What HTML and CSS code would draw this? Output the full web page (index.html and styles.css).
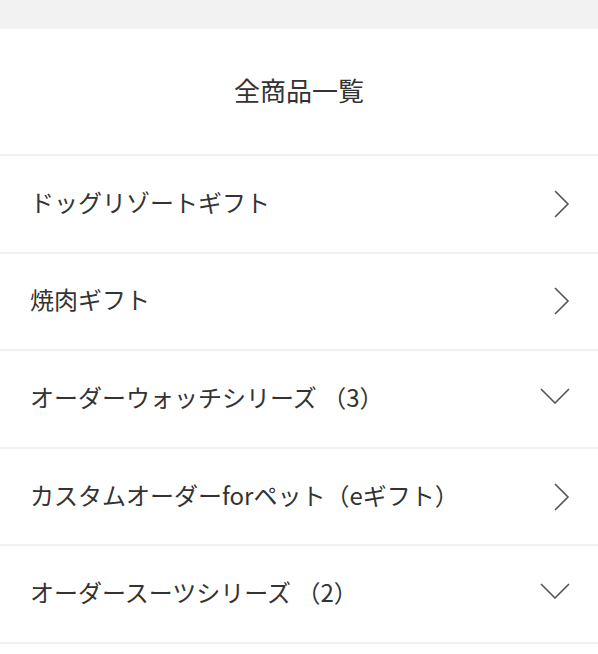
FILE: index.html
```html
<!DOCTYPE html>
<html lang="ja">

<head>
    <meta charset="UTF-8">
    <meta name="viewport" content="width=device-width, initial-scale=1.0">
    <title>全商品一覧</title>
    <link rel="stylesheet" href="styles.css">
</head>

<body>
    <div class="topbar"></div>
    <div class="page">
        <h1 class="title">全商品一覧</h1>
        <ul class="menu">
            <li class="menu-item">
                <span class="label">ドッグリゾートギフト</span>
                <svg class="icon-right" viewBox="0 0 16 28"><path d="M1 1 L14 14 L1 27" /></svg>
            </li>
            <li class="menu-item">
                <span class="label">焼肉ギフト</span>
                <svg class="icon-right" viewBox="0 0 16 28"><path d="M1 1 L14 14 L1 27" /></svg>
            </li>
            <li class="menu-item">
                <span class="label">オーダーウォッチシリーズ （3）</span>
                <svg class="icon-down" viewBox="0 0 30 16"><path d="M1 1 L15 15 L29 1" /></svg>
            </li>
            <li class="menu-item">
                <span class="label">カスタムオーダーforペット（eギフト）</span>
                <svg class="icon-right" viewBox="0 0 16 28"><path d="M1 1 L14 14 L1 27" /></svg>
            </li>
            <li class="menu-item">
                <span class="label">オーダースーツシリーズ （2）</span>
                <svg class="icon-down" viewBox="0 0 30 16"><path d="M1 1 L15 15 L29 1" /></svg>
            </li>
        </ul>
    </div>
</body>

</html>
```

FILE: styles.css
```css
body {
    margin: 0;
    padding: 0;
    background-color: #fff;
    color: #333;
    font-family: "Noto Sans CJK JP", "Noto Sans", sans-serif;
}

.topbar {
    height: 29px;
    background-color: #f2f2f2;
}

.title {
    margin: 0;
    height: 127px;
    display: flex;
    justify-content: center;
    align-items: center;
    font-size: 26px;
    font-weight: normal;
    padding-bottom: 4px;
    border-bottom: 2px solid #f1f1f1;
    box-sizing: border-box;
}

.menu {
    list-style: none;
    margin: 0;
    padding: 0;
}

.menu-item {
    height: 97.6px;
    box-sizing: border-box;
    display: flex;
    align-items: center;
    justify-content: space-between;
    padding: 0 28px 0 30px;
    border-bottom: 2px solid #f1f1f1;
    font-size: 24px;
}

.label {
    margin-bottom: 5px;
}

.icon-right,
.icon-down {
    fill: none;
    stroke: #555;
    stroke-width: 1.6;
}

.icon-right {
    width: 16px;
    height: 28px;
}

.icon-down {
    width: 30px;
    height: 16px;
    margin-top: -6px;
}
```
